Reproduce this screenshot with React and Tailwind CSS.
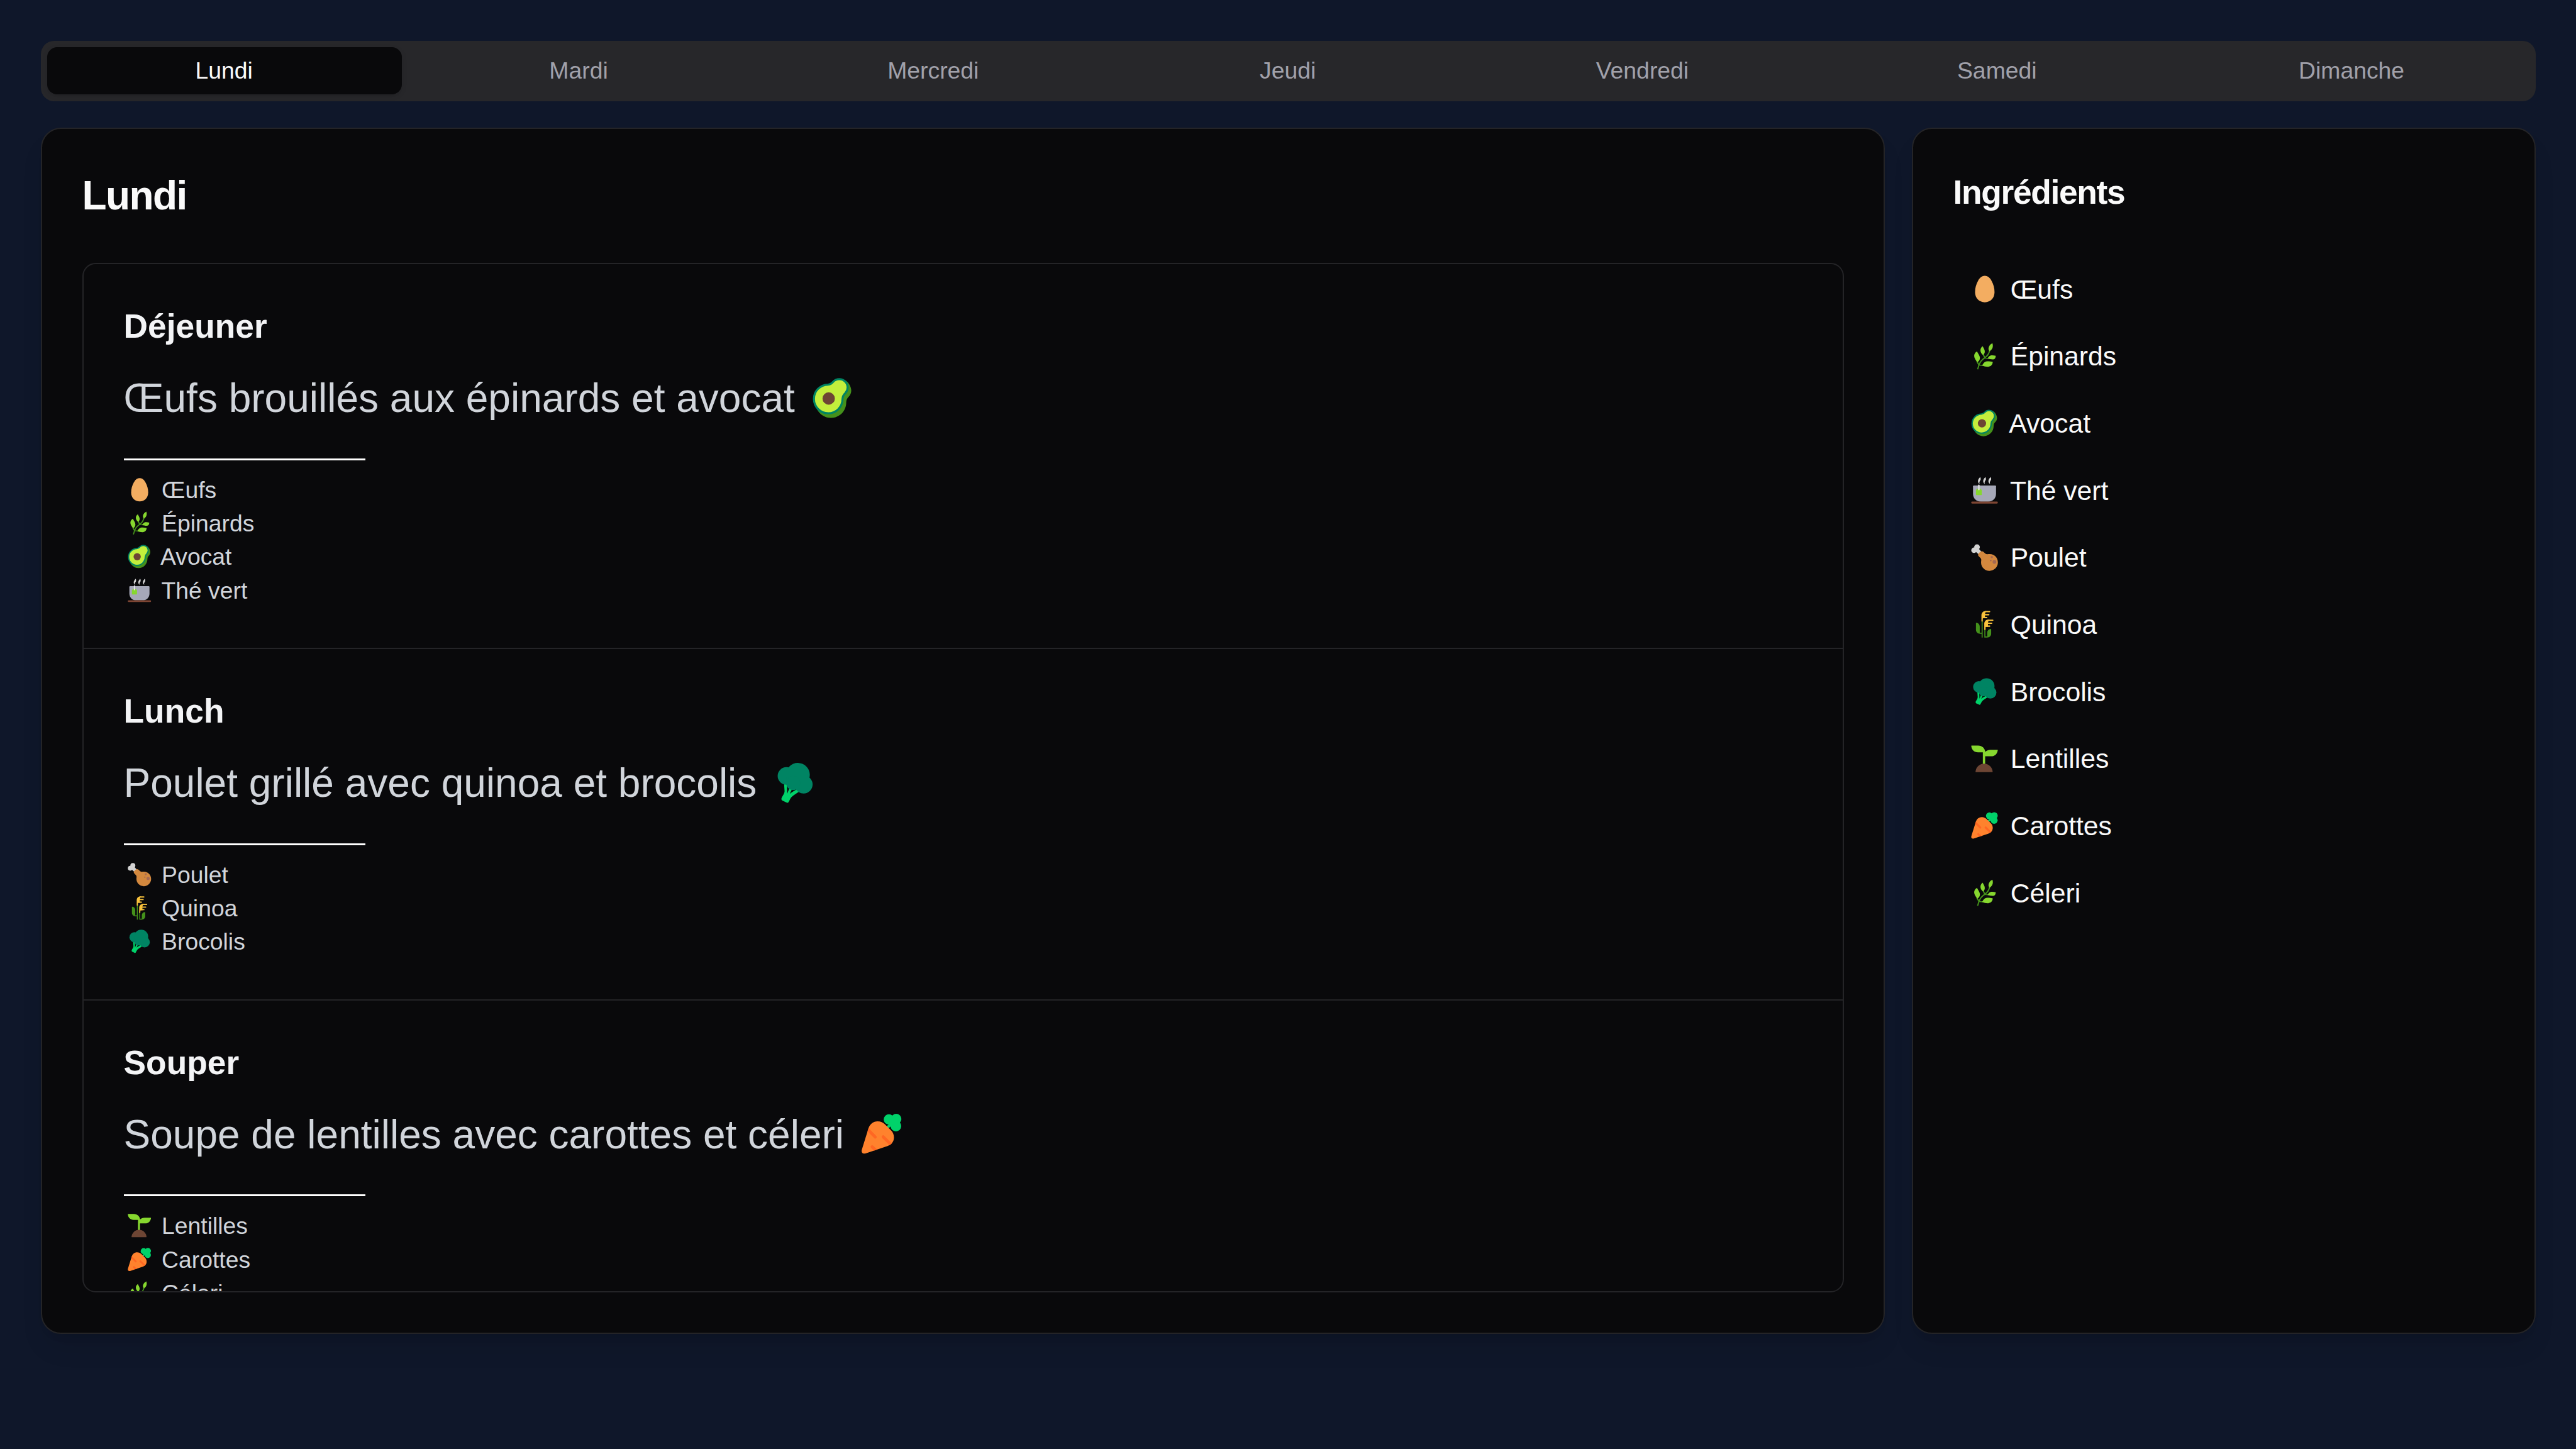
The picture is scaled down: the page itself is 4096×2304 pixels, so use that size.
import React, { useId } from "react";

function Egg() {
  return (
    <path
      fill="#F3AD61"
      d="M16.3 1C12.5 1 10.3 3.6 8.6 6.9C6.6 10.8 5.3 14.5 5.3 19.6C5.3 26.2 9.8 31 16.3 31C22.8 31 27.3 26.2 27.3 19.6C27.3 14.5 26 10.8 24 6.9C22.3 3.6 20.1 1 16.3 1Z"
    />
  );
}

function Herb() {
  return (
    <>
      <g fill="none" stroke="#44911B" strokeWidth="1.4">
        <path d="M8.2 30.7C8.7 29.3 9.2 27.6 9.7 25.8C11 22.2 13.2 19.7 16.4 17.7C19.2 15.7 20.9 13.3 21.8 9.6" />
        <path d="M16.4 17.7L13.9 12.8M9.7 25.8L7.4 21.8" />
        <path strokeWidth="1" d="M16 18L20.4 18.4M9.6 25.9L14 26.3" />
      </g>
      <g fill="#86D72F">
        <path d="M24.9 1.2C22.3 2.4 20.5 5 20.5 7.4C20.5 8.6 21 9.6 21.8 10.3C24.4 8.4 25.4 6.4 25.4 4.2C25.4 3.1 25.2 2.1 24.9 1.2Z" />
        <path d="M13.9 4.7C12.2 5.8 11.4 7.5 11.4 9.4C11.4 11.4 12.6 13.2 14.4 14.5C15.7 13.5 16.3 12.2 16.3 10.6C16.3 8.5 15 7.2 13.9 4.7Z" />
        <path d="M7.6 10.4C5.5 11.5 4.3 13.3 4.3 15.6C4.3 18.2 6.2 20.2 7.7 22.8C9.7 21.6 10.8 20.2 10.8 17.8C10.8 15 8.7 13.2 7.6 10.4Z" />
        <path d="M28.7 15.4C26.6 15 24.8 14.7 22.9 15.1C21.3 15.6 20.4 17 19.3 18.5C21.4 19 23.4 19.6 25.8 19.5C27.8 19.2 28.6 17.6 28.7 15.4Z" />
        <path d="M25.3 22.4C22.5 22 20.2 21.5 17.9 21.9C15.7 22.4 14.5 24.2 13.2 26.4C15.6 27.2 17.7 27.9 20.2 27.8C23.3 27.5 25.1 25.6 25.3 22.4Z" />
      </g>
    </>
  );
}

function Avocado() {
  return (
    <>
      <path
        fill="#44911B"
        d="M3.2 19.4C3.2 13.1 8.2 8.2 14.5 7.9C16 7.7 17 7.1 17.9 5.9C19.2 4.5 21 3.8 24.5 2.2C27.5 3.2 30.1 7 30.1 10.4C30.1 12.2 29.4 13.8 28.2 15C26.9 16.2 26.3 17.7 26.3 19.4C26.3 25.9 21.2 31 14.8 31C8.4 31 3.2 25.8 3.2 19.4Z"
      />
      <path
        fill="#C3EF3C"
        stroke="#008463"
        strokeWidth="1.55"
        d="M2 16.7C2 10.8 6.6 6.2 12.5 5.95C14.3 5.8 15.5 5.1 16.5 3.8C17.6 2.5 19.3 1.85 21.1 1.85C24.6 1.85 27.35 4.7 27.35 8.2C27.35 9.8 26.7 11.2 25.7 12.3C24.2 13.7 23.6 14.8 23.5 16.7C23.5 22.8 18.7 27.55 12.8 27.55C6.8 27.55 2 22.7 2 16.7Z"
      />
      <circle cx="13.1" cy="16.4" r="4.65" fill="#6D4534" />
    </>
  );
}

const STEAM =
  "M11.1 1C9.9 2.2 8.6 4 8.6 5.6C8.6 7 9.4 8.2 10.5 8.8C10 7.4 10.1 6.6 10.6 5.8C11.3 4.8 11.7 4.4 11.7 3.2C11.7 2.3 11.5 1.6 11.1 1Z";

function Tea() {
  return (
    <>
      <g fill="#D3D3D3">
        <path d={STEAM} />
        <path d={STEAM} transform="translate(5.9 0)" />
        <path d={STEAM} transform="translate(11.8 0)" />
      </g>
      <path
        fill="#A6A8B8"
        d="M3 11.5Q3 10.6 4 10.6H28Q29 10.6 29 11.5V20C29 25.2 25 28.9 20 28.9H12C7 28.9 3 25.2 3 20Z"
      />
      <path fill="#86D72F" d="M6.3 16.2C6.3 15.5 7.6 14.2 8.6 14.2H10.6C11.6 14.2 12.9 15.5 12.9 16.2V20.8Q12.9 21.4 12.3 21.4H6.9Q6.3 21.4 6.3 20.8Z" />
      <rect x="8.8" y="9.6" width="1.6" height="6.3" rx="0.7" fill="#E6E6E6" />
      <rect x="1" y="28.8" width="30" height="2.2" rx="1" fill="#7D4533" />
    </>
  );
}

function Drumstick() {
  return (
    <>
      <g fill="#D3D3D3">
        <circle cx="4.1" cy="7.8" r="3.1" />
        <circle cx="7.5" cy="4.2" r="3.2" />
        <path d="M5 8.5L9 5.5L13.2 10.2L10 13Z" />
      </g>
      <path
        fill="#D3883E"
        d="M13 8.9C15.2 8.9 16.3 12.1 19 12.3C20 12.2 21 12.1 22 12.1C27.1 12.1 31.1 16.3 31.1 21.5C31.1 26.8 26.8 31 21.6 31C16.3 31 12.1 26.8 12.1 21.6C12.1 20.2 12.5 19 12.2 18C11.8 16 8.7 14.8 8.7 13C8.7 11.6 11.3 8.9 13 8.9Z"
      />
      <g fill="#A56953">
        <circle cx="24.2" cy="15.5" r="1.3" />
        <circle cx="27.2" cy="20.9" r="2.1" />
        <circle cx="23" cy="19.3" r="0.9" />
      </g>
    </>
  );
}

function Grain() {
  return (
    <>
      <g fill="#44911B">
        <path d="M12.7 12H13.9V31H12.7V26.8H11C8.2 26.8 6.3 24.8 6.3 22.2V14.9Q6.3 14.3 7 14.4C9.3 14.7 10.6 16.5 10.6 18.8V25.6H12.7Z" />
        <path d="M15.8 21H17V29.9H19.1V25.4C19.1 23.2 20.5 21.6 22.8 21.3Q23.5 21.3 23.5 21.9V26.6C23.5 29.2 21.6 31 19 31H15.8Z" />
      </g>
      <g fill="#F9C23C">
        <path d="M12.5 12.4V6C12.5 3 14.4 1 17.6 1L16.4 5L16.6 9.3H14.6Q14 9.3 14 9.9V12.4Q14 13 13.25 13Q12.5 13 12.5 12.4Z" />
        <path d="M15.7 21.8V15.7C15.7 12.7 17.6 10.7 20.8 10.7L19.8 14.7L20 19H17.8Q17.2 19 17.2 19.6V21.8Q17.2 22.5 16.45 22.5Q15.7 22.5 15.7 21.8Z" />
      </g>
      <g fill="none" stroke="#F9C23C" strokeWidth="1.5" strokeLinecap="round">
        <path d="M17 1.8H21.7M15.5 5.2H20.8M15 8.5H18.5" />
        <path d="M20.2 11.5H25.3M18.8 14.9H24.1M18 18.2H21.8" />
      </g>
    </>
  );
}

function Broccoli() {
  return (
    <>
      <path
        fill="#00D26A"
        d="M7.9 16.5L8.3 22.3C8.2 24.5 6.5 26 6 27.6C5.8 28.4 6 29 6.7 29.4L9.7 30.8C10.4 31.2 11 31 11.4 30.3C12.2 29 12.6 27.6 13.6 26.6C15 25.2 17.7 23.7 19.4 22.5L17.4 20.8C15.4 22.3 13.6 23 12.2 24.3L14 20.6L12 19.9L10.3 24.2L10 16.5Z"
      />
      <g fill="#008463">
        <circle cx="9.7" cy="10.8" r="6.6" />
        <circle cx="18.3" cy="10" r="9" />
        <circle cx="22.6" cy="17.2" r="6.8" />
        <circle cx="14.8" cy="16.1" r="5.3" />
      </g>
    </>
  );
}

function Seedling() {
  return (
    <>
      <path
        fill="#86D72F"
        d="M1.3 1H8.8C13.2 1 16.4 4 16.8 8.2C18.1 6.7 20.2 5.8 22.8 5.8H30.7Q31 5.8 31 6.2C30.4 10.4 27.6 13.2 23.6 13.2H16.7V22H14.1V8.7H8.6C4.4 8.7 1.4 5.9 1 1.4Q1 1 1.3 1Z"
      />
      <path fill="#6D4534" d="M5.8 30.7C6.2 25.4 10.4 21.5 15.5 21.5C20.6 21.5 24.8 25.4 25.2 30.7Q25.2 31 24.8 31H6.2Q5.8 31 5.8 30.7Z" />
    </>
  );
}

const CARROT_BODY =
  "M6.1 12C7.2 8.6 9.7 6.6 13 6.6C15.3 6.6 17.1 7.5 18.5 8.9L23.3 13.6C24.6 15 25.3 16.8 25.3 18.7C25.3 21.8 23.5 24.3 20.5 25.2L4 30.8C2 31.4 0.5 30 1.1 28Z";

function Carrot() {
  const id = useId();
  return (
    <>
      <g fill="#00D26A">
        <circle cx="21.5" cy="5.2" r="3.9" />
        <circle cx="27" cy="4.9" r="3.9" />
        <circle cx="26.8" cy="10.2" r="4" />
        <circle cx="25" cy="7.5" r="3.4" />
        <path d="M19.2 10.9L23.5 7L24.6 9.2L20.6 12.2Z" />
      </g>
      <clipPath id={id}>
        <path d={CARROT_BODY} />
      </clipPath>
      <path fill="#FF822D" d={CARROT_BODY} />
      <g clipPath={`url(#${id})`} fill="none" stroke="#FF6723" strokeWidth="2.3" strokeLinecap="round">
        <path d="M4.8 12L11.2 18.4M17.2 18.3L23.8 24.8M8.9 25.8L12.8 29.6" />
      </g>
    </>
  );
}

const ICONS = {
  egg: Egg,
  herb: Herb,
  avocado: Avocado,
  tea: Tea,
  drumstick: Drumstick,
  grain: Grain,
  broccoli: Broccoli,
  seedling: Seedling,
  carrot: Carrot,
};

/* Emoji-like glyph sized relative to the surrounding text. */
function Emoji({ name }) {
  const Shape = ICONS[name];
  return (
    <svg
      viewBox="0 0 32 32"
      aria-hidden="true"
      className="ml-[0.134em] mr-[0.155em] inline-block h-[1.056em] w-[1.056em] align-[-0.176em]"
    >
      <Shape />
    </svg>
  );
}

const DAYS = ["Lundi", "Mardi", "Mercredi", "Jeudi", "Vendredi", "Samedi", "Dimanche"];

const MEALS = [
  {
    title: "Déjeuner",
    dish: "Œufs brouillés aux épinards et avocat",
    icon: "avocado",
    items: [
      ["egg", "Œufs"],
      ["herb", "Épinards"],
      ["avocado", "Avocat"],
      ["tea", "Thé vert"],
    ],
  },
  {
    title: "Lunch",
    dish: "Poulet grillé avec quinoa et brocolis",
    icon: "broccoli",
    items: [
      ["drumstick", "Poulet"],
      ["grain", "Quinoa"],
      ["broccoli", "Brocolis"],
    ],
  },
  {
    title: "Souper",
    dish: "Soupe de lentilles avec carottes et céleri",
    icon: "carrot",
    items: [
      ["seedling", "Lentilles"],
      ["carrot", "Carottes"],
      ["herb", "Céleri"],
    ],
  },
];

const INGREDIENTS = [
  ["egg", "Œufs"],
  ["herb", "Épinards"],
  ["avocado", "Avocat"],
  ["tea", "Thé vert"],
  ["drumstick", "Poulet"],
  ["grain", "Quinoa"],
  ["broccoli", "Brocolis"],
  ["seedling", "Lentilles"],
  ["carrot", "Carottes"],
  ["herb", "Céleri"],
];

const CARD =
  "rounded-[32px] border-2 border-[#242427] bg-[#09090b] px-[63.5px] pt-[63.5px] shadow-[0_27px_40px_-8px_rgb(0_0_0/0.1),0_11px_16px_-11px_rgb(0_0_0/0.1)]";

function Tabs() {
  return (
    <div className="flex h-[95.5px] rounded-[21px] bg-[#27272a] p-[10.3px] text-[37.33px] leading-[53.33px]">
      {DAYS.map((day, i) => (
        <button
          key={day}
          className={
            i === 0
              ? "flex-1 basis-0 rounded-[16px] bg-[#09090b] pr-[2px] pb-[1px] text-[#fafafa] shadow-[0_3px_8px_0_rgb(0_0_0/0.1),0_3px_5px_-3px_rgb(0_0_0/0.1)]"
              : "flex-1 basis-0 rounded-[16px] pr-[2px] pb-[1px] text-[#a1a1aa]"
          }
        >
          {day}
        </button>
      ))}
    </div>
  );
}

function Meal({ meal }) {
  return (
    <section className="border-b-2 border-[#242427] px-[64px] pt-[62.5px] pb-[64px] last:border-b-0">
      <h3 className="text-[53.33px] leading-[74.67px] font-bold text-gray-100">{meal.title}</h3>
      <p className="mt-[34px] text-[64px] leading-[85.33px] whitespace-nowrap text-[#d1d5db]">
        {meal.dish} <Emoji name={meal.icon} />
      </p>
      <div className="mt-[52.4px] h-[3px] w-[384px] bg-white" />
      <ul className="mt-[20.8px] text-[37.33px] leading-[53.33px] text-[#d1d5db]">
        {meal.items.map(([icon, label]) => (
          <li key={label} className="h-[53.33px] whitespace-pre">
            <Emoji name={icon} />
            {" " + label}
          </li>
        ))}
      </ul>
    </section>
  );
}

export default function App() {
  return (
    <div className="h-[2304px] w-[4096px] overflow-hidden bg-[#0f172a] pt-[65px] pr-[63.7px] pl-[65px] font-['Liberation_Sans',Arial,sans-serif] text-[#fafafa]">
      <Tabs />
      <main className="mt-[42.6px] flex h-[1918.4px] gap-[43px]">
        <div className={`${CARD} w-[2932px] shrink-0`}>
          <h2 className="text-[64px] leading-[85.33px] font-bold tracking-tight">Lundi</h2>
          <div className="mt-[64px] h-[1636.6px] overflow-hidden rounded-[21px] border-2 border-[#242427]">
            {MEALS.map((meal) => (
              <Meal key={meal.title} meal={meal} />
            ))}
          </div>
        </div>
        <aside className={`${CARD} flex-1`}>
          <h2 className="text-[53.33px] leading-[74.67px] font-bold tracking-tight">Ingrédients</h2>
          <ul className="mt-[63px] pl-[22px] text-[42.67px] leading-[64px]">
            {INGREDIENTS.map(([icon, label]) => (
              <li key={label} className="flex h-[106.67px] items-center">
                <span className="whitespace-pre">
                  <Emoji name={icon} />
                  {" " + label}
                </span>
              </li>
            ))}
          </ul>
        </aside>
      </main>
    </div>
  );
}
